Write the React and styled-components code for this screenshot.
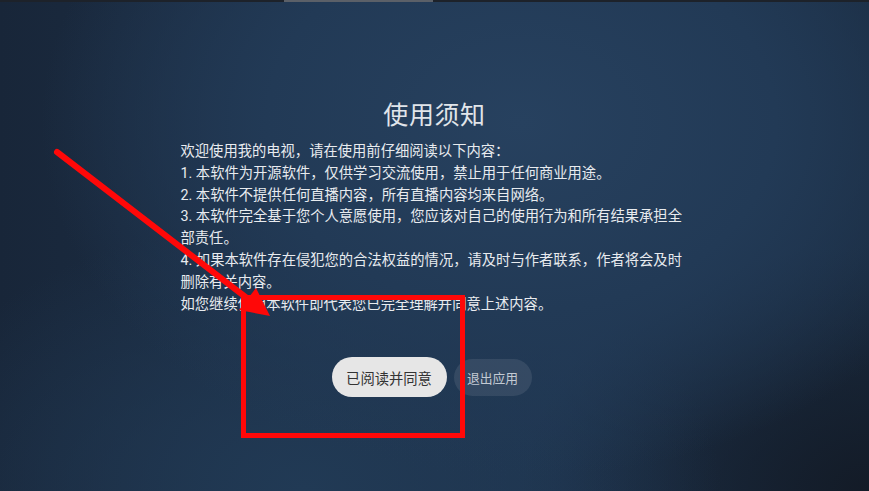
import React from 'react'
import styled, { createGlobalStyle } from 'styled-components'

const Global = createGlobalStyle`
  html, body { margin: 0; padding: 0; }
  body {
    font-family: Roboto, "Noto Sans CJK SC", sans-serif;
    background: #172538;
  }
`

const Screen = styled.div`
  position: relative;
  width: 869px;
  height: 491px;
  overflow: hidden;
  display: flex;
  flex-direction: column;
  align-items: center;
  padding-top: 100px;
  box-sizing: border-box;
  background:
    radial-gradient(ellipse 65% 85% at 60% 25%, #27415f 0%, #223a56 45%, rgba(30, 48, 72, 0) 85%),
    radial-gradient(ellipse 60% 70% at 35% 100%, #213a55 0%, rgba(33, 58, 85, 0) 80%),
    radial-gradient(ellipse 40% 50% at 100% 100%, #131b27 0%, rgba(19, 27, 39, 0) 100%),
    linear-gradient(90deg, #182639 0%, #1d3048 35%, #1f3550 65%, #1a2b40 100%);
`

const TopBar = styled.div`
  position: absolute;
  top: 0;
  left: 0;
  right: 0;
  height: 2px;
  background: #1d222a;
`

const TopBarSegment = styled.div`
  margin-left: 284px;
  width: 149px;
  height: 100%;
  background: #5b6068;
`

const Title = styled.h1`
  margin: 0;
  font-size: 25px;
  font-weight: 400;
  line-height: 32px;
  color: #e1e5ea;
  letter-spacing: 0.6px;
`

const Notice = styled.div`
  width: 508px;
  margin-top: 9px;
  font-size: 14.3px;
  line-height: 21.8px;
  color: #e8ebef;
`

const Line = styled.p`
  margin: 0;
`

const Actions = styled.div`
  display: flex;
  align-items: center;
  gap: 7px;
  margin-top: 42px;
  padding-right: 6px;
`

const Button = styled.button`
  border: none;
  outline: none;
  font-family: inherit;
  border-radius: 999px;
  padding: 0;
  cursor: pointer;
  width: ${p => (p.$focused ? '115px' : '78px')};
  height: ${p => (p.$focused ? '40px' : '37px')};
  font-size: ${p => (p.$focused ? '14.3px' : '12.8px')};
  background: ${p => (p.$focused ? '#e6e6e6' : 'rgba(255, 255, 255, 0.09)')};
  color: ${p => (p.$focused ? '#333' : '#c3cad3')};
`

const Annotation = styled.svg`
  position: absolute;
  left: 0;
  top: 0;
  pointer-events: none;
`

const lines = [
  '欢迎使用我的电视，请在使用前仔细阅读以下内容：',
  '1. 本软件为开源软件，仅供学习交流使用，禁止用于任何商业用途。',
  '2. 本软件不提供任何直播内容，所有直播内容均来自网络。',
  '3. 本软件完全基于您个人意愿使用，您应该对自己的使用行为和所有结果承担全部责任。',
  '4. 如果本软件存在侵犯您的合法权益的情况，请及时与作者联系，作者将会及时删除有关内容。',
  '如您继续使用本软件即代表您已完全理解并同意上述内容。',
]

export default function App() {
  return (
    <Screen>
      <Global />
      <TopBar>
        <TopBarSegment />
      </TopBar>
      <Title>使用须知</Title>
      <Notice>
        {lines.map(l => (
          <Line key={l}>{l}</Line>
        ))}
      </Notice>
      <Actions>
        <Button $focused>已阅读并同意</Button>
        <Button>退出应用</Button>
      </Actions>
      {/* red markup drawn over the screenshot */}
      <Annotation width="869" height="491" viewBox="0 0 869 491">
        <line x1="57" y1="152" x2="252" y2="302" stroke="#ff0808" strokeWidth="6" strokeLinecap="round" />
        <polygon points="270,316 239,310 256,288" fill="#ff0808" />
        <rect x="243.5" y="297.5" width="219" height="138" fill="none" stroke="#ff0808" strokeWidth="5" />
      </Annotation>
    </Screen>
  )
}
